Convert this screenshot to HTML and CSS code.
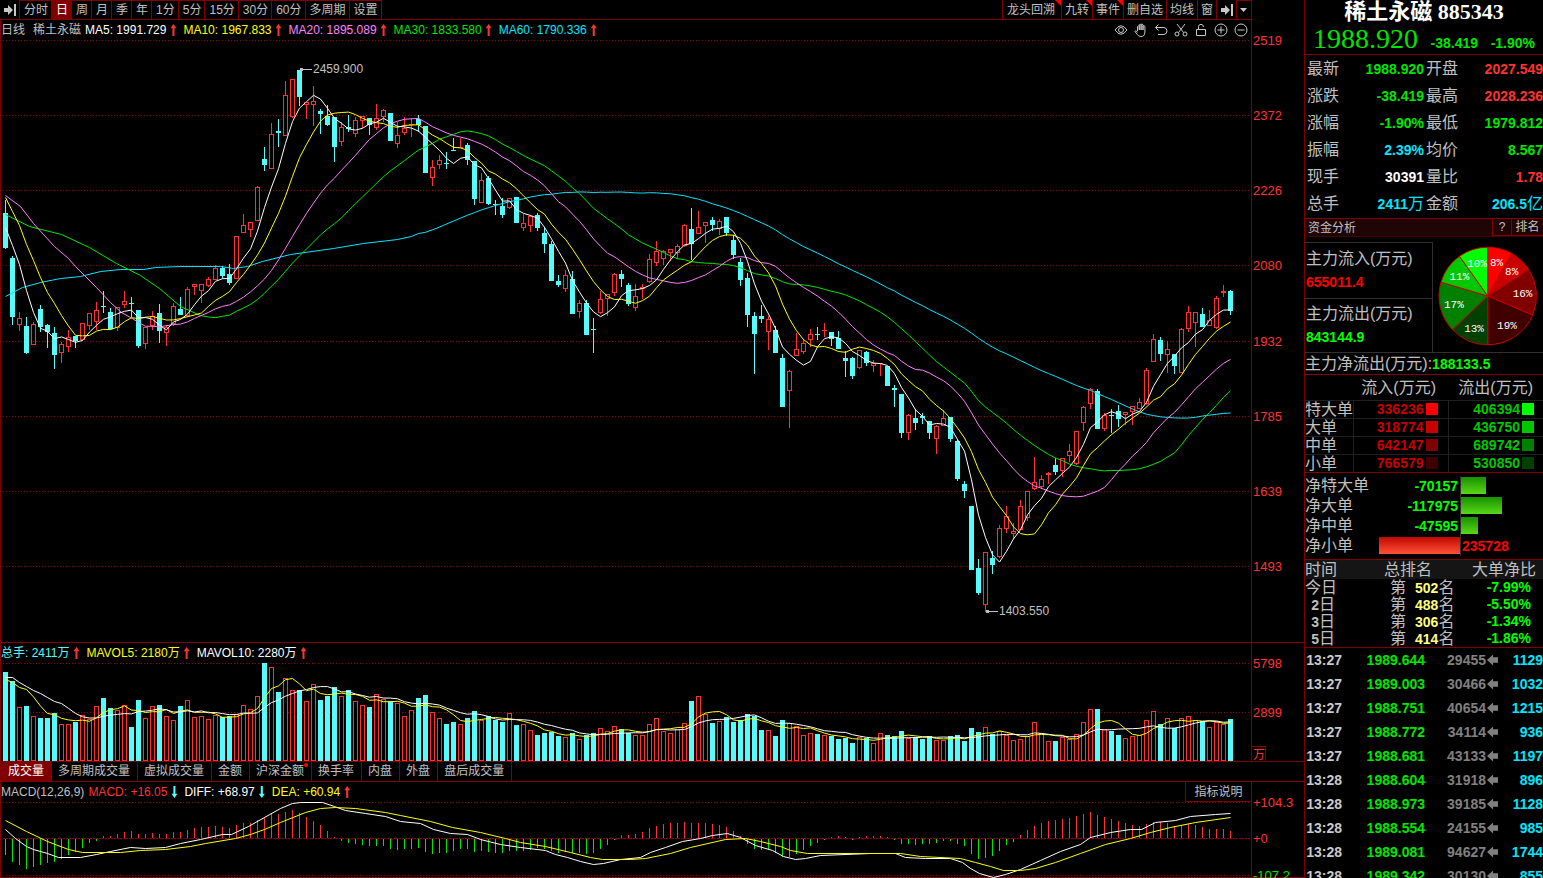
FILE: index.html
```html
<!DOCTYPE html>
<html lang="zh-CN">
<head>
<meta charset="utf-8">
<title>稀土永磁 885343</title>
<link rel="stylesheet" href="styles.css">
</head>
<body>
<main class="main">
  <nav class="toolbar">
    <button class="tool tool-icon" aria-label="跳转"><svg width="12" height="12" viewBox="0 0 12 12"><path d="M0 4h4V1l5 5-5 5V8H0zM10 0h2v12h-2z" fill="#c8c8c8"/></svg></button>
    <button class="tool">分时</button><button class="tool active">日</button><button class="tool">周</button><button class="tool">月</button><button class="tool">季</button><button class="tool">年</button><button class="tool">1分</button><button class="tool">5分</button><button class="tool">15分</button><button class="tool">30分</button><button class="tool">60分</button><button class="tool">多周期</button><button class="tool">设置</button>
    <span class="spacer"></span>
    <button class="tool right first ear">龙头回溯</button><button class="tool right ear">九转</button><button class="tool right ear">事件</button><button class="tool right">删自选</button><button class="tool right">均线</button><button class="tool right">窗</button>
    <button class="tool tool-icon" aria-label="收起"><svg width="12" height="12" viewBox="0 0 12 12"><path d="M0 4h4V1l5 5-5 5V8H0zM10 0h2v12h-2z" fill="#c8c8c8"/></svg></button>
    <button class="tool tool-drop" aria-label="更多"><svg width="7" height="4" viewBox="0 0 7 4"><path d="M0 0h7L3.500 4z" fill="#c8c8c8"/></svg></button>
  </nav>

  <section class="pane pane-price">
    <div class="info">
      <span class="gray">日线</span><span class="gray name">稀土永磁</span>
      <span class="stat white">MA5: 1991.729<i class="up"></i></span>
      <span class="stat yellow">MA10: 1967.833<i class="up"></i></span>
      <span class="stat pink">MA20: 1895.089<i class="up"></i></span>
      <span class="stat green">MA30: 1833.580<i class="up"></i></span>
      <span class="stat blue">MA60: 1790.336<i class="up"></i></span>
      <span class="spacer"></span>
      <span class="icons">
        <button aria-label="显示"><svg viewBox="0 0 14 14"><path d="M1 7q6-8.500 12 0q-6 8.500-12 0z"/><circle cx="7" cy="7" r="2.500"/></svg></button>
        <button aria-label="拖动"><svg viewBox="0 0 14 14"><path d="M3.500 8V3.500q.900-1.300 1.800 0V7V1.800q.900-1.300 1.800 0V7V1.500q1-1.200 1.900.3V7V3q1-1.200 1.900.300V9q0 4.500-4 4.500q-2.500 0-3.700-2.200L.8 8.300q.700-1.500 2.700.9"/></svg></button>
        <button aria-label="撤销"><svg viewBox="0 0 14 14"><path d="M4.500 1.500L1.500 4.500l3 3M1.500 4.500H10q3 .5 3 3.500t-3 3.500H4"/></svg></button>
        <button aria-label="剪切"><svg viewBox="0 0 14 14"><path d="M3 1l6.500 8.500M11 1L4.500 9.500"/><circle cx="3" cy="11" r="2"/><circle cx="11" cy="11" r="2"/></svg></button>
        <button aria-label="锁定"><svg viewBox="0 0 14 14"><path d="M2.500 6.500h9v6h-9zM4.500 6.500V3.500q0-2 2.500-2.200Q9.500 1.500 9.500 4"/></svg></button>
        <button aria-label="放大"><svg viewBox="0 0 14 14"><circle cx="7" cy="7" r="6"/><path d="M3.500 7h7M7 3.500v7"/></svg></button>
        <button aria-label="缩小"><svg viewBox="0 0 14 14"><circle cx="7" cy="7" r="6"/><path d="M3.500 7h7"/></svg></button>
      </span>
    </div>
    <svg class="chart chart-price" id="price"></svg>
  </section>

  <section class="pane">
    <div class="info">
      <span class="stat cyan">总手: 2411万<i class="up"></i></span>
      <span class="stat yellow">MAVOL5: 2180万<i class="up"></i></span>
      <span class="stat white">MAVOL10: 2280万<i class="up"></i></span>
    </div>
    <svg class="chart chart-volume" id="volume"></svg>
  </section>

  <nav class="tabs">
    <button class="tab active">成交量</button><button class="tab">多周期成交量</button><button class="tab">虚拟成交量</button><button class="tab">金额</button><button class="tab dot">沪深金额</button><button class="tab">换手率</button><button class="tab">内盘</button><button class="tab">外盘</button><button class="tab">盘后成交量</button>
  </nav>

  <section class="pane">
    <div class="info">
      <span class="gray">MACD(12,26,9)</span>
      <span class="stat red macd-first">MACD: +16.05<i class="down"></i></span>
      <span class="stat white">DIFF: +68.97<i class="down"></i></span>
      <span class="stat yellow">DEA: +60.94<i class="up"></i></span>
      <span class="spacer"></span>
      <button class="explain">指标说明</button>
    </div>
    <svg class="chart chart-macd" id="macd"></svg>
  </section>
</main>

<aside class="side">
  <header class="head">
    <h1>稀土永磁 885343</h1>
    <p><span class="last">1988.920</span><b>-38.419</b><b>-1.90%</b></p>
  </header>
  <dl class="quote">
    <dt>最新</dt><dd class="green">1988.920</dd><dt>开盘</dt><dd class="red">2027.549</dd>
    <dt>涨跌</dt><dd class="green">-38.419</dd><dt>最高</dt><dd class="red">2028.236</dd>
    <dt>涨幅</dt><dd class="green">-1.90%</dd><dt>最低</dt><dd class="green">1979.812</dd>
    <dt>振幅</dt><dd class="blue">2.39%</dd><dt>均价</dt><dd class="green">8.567</dd>
    <dt>现手</dt><dd class="white">30391</dd><dt>量比</dt><dd class="red">1.78</dd>
    <dt>总手</dt><dd class="blue">2411<span>万</span></dd><dt>金额</dt><dd class="blue">206.5<span>亿</span></dd>
  </dl>
  <div class="bar"><h2>资金分析</h2><button>?</button><button class="rank-btn">排名</button></div>
  <div class="capital">
    <div class="flows">
      <div class="flow"><span>主力流入(万元)</span><b class="in">655011.4</b></div>
      <div class="flow"><span>主力流出(万元)</span><b class="out">843144.9</b></div>
    </div>
    <svg class="pie" id="pie" viewBox="0 0 110 110"></svg>
  </div>
  <div class="net">主力净流出(万元):<b class="out">188133.5</b></div>
  <table class="orders">
    <thead><tr><th></th><th>流入(万元)</th><th>流出(万元)</th></tr></thead>
    <tbody>
      <tr><th>特大单</th><td class="oin">336236<i class="r1"></i></td><td class="oout">406394<i class="g1"></i></td></tr>
      <tr><th>大单</th><td class="oin">318774<i class="r2"></i></td><td class="oout">436750<i class="g2"></i></td></tr>
      <tr><th>中单</th><td class="oin">642147<i class="r3"></i></td><td class="oout">689742<i class="g3"></i></td></tr>
      <tr><th>小单</th><td class="oin">766579<i class="r4"></i></td><td class="oout">530850<i class="g4"></i></td></tr>
    </tbody>
  </table>
  <div class="netbars">
    <div class="nb"><span>净特大单</span><b class="out">-70157</b><div class="half"><i class="neg" style="width:25px"></i></div></div>
    <div class="nb"><span>净大单</span><b class="out">-117975</b><div class="half"><i class="neg" style="width:41px"></i></div></div>
    <div class="nb"><span>净中单</span><b class="out">-47595</b><div class="half"><i class="neg" style="width:17px"></i></div></div>
    <div class="nb"><span>净小单</span><div class="lhs"><i class="pos" style="width:81px"></i></div><div class="half"><b class="in">235728</b></div></div>
  </div>
  <table class="ranks">
    <thead><tr><th>时间</th><th>总排名</th><th>大单净比</th></tr></thead>
    <tbody>
      <tr><td>今日</td><td>第<b>502</b>名</td><td>-7.99%</td></tr>
      <tr><td><b>2</b>日</td><td>第<b>488</b>名</td><td>-5.50%</td></tr>
      <tr><td><b>3</b>日</td><td>第<b>306</b>名</td><td>-1.34%</td></tr>
      <tr><td><b>5</b>日</td><td>第<b>414</b>名</td><td>-1.86%</td></tr>
    </tbody>
  </table>
  <div class="ticks-wrap">
  <table class="ticks">
    <tbody>
      <tr><td>13:27</td><td>1989.644</td><td>29455<i class="left"></i></td><td>1129</td></tr>
      <tr><td>13:27</td><td>1989.003</td><td>30466<i class="left"></i></td><td>1032</td></tr>
      <tr><td>13:27</td><td>1988.751</td><td>40654<i class="left"></i></td><td>1215</td></tr>
      <tr><td>13:27</td><td>1988.772</td><td>34114<i class="left"></i></td><td>936</td></tr>
      <tr><td>13:27</td><td>1988.681</td><td>43133<i class="left"></i></td><td>1197</td></tr>
      <tr><td>13:28</td><td>1988.604</td><td>31918<i class="left"></i></td><td>896</td></tr>
      <tr><td>13:28</td><td>1988.973</td><td>39185<i class="left"></i></td><td>1128</td></tr>
      <tr><td>13:28</td><td>1988.554</td><td>24155<i class="left"></i></td><td>985</td></tr>
      <tr><td>13:28</td><td>1989.081</td><td>94627<i class="left"></i></td><td>1744</td></tr>
      <tr><td>13:28</td><td>1989.342</td><td>30130<i class="left"></i></td><td>855</td></tr>
    </tbody>
  </table>
  </div>
</aside>
<script src="charts.js"></script>
</body>
</html>
```

FILE: styles.css
```css
* { box-sizing: border-box; }
body {
  margin: 0;
  height: 100vh;
  display: flex;
  overflow: hidden;
  background: #000;
  color: #c0c0c0;
  font: 12px/18px "Liberation Sans", "Noto Sans CJK SC", sans-serif;
}
button {
  margin: 0;
  padding: 0;
  border: 0;
  background: none;
  color: inherit;
  font: inherit;
}
h1, h2, p, dl, dd { margin: 0; font-weight: normal; }
i { display: inline-block; flex: none; font-style: normal; }
.spacer { flex: 1; }

.white { color: #fff; }
.yellow { color: #ff0; }
.pink { color: #ff80ff; }
.green { color: #00e600; }
.blue { color: #00e6ff; }
.cyan { color: #54fcfc; }
.red { color: #ff3232; }
.in { color: #f00; }
.out { color: #0f0; }

/* chart column */
.main {
  flex: 1;
  min-width: 0;
  display: flex;
  flex-direction: column;
}
.toolbar {
  display: flex;
  flex: none;
  height: 20px;
  margin-right: 52px;
  border-bottom: 1px solid #800000;
  border-right: 1px solid #800000;
}
.tool {
  height: 19px;
  padding: 0 3px 0 4px;
  border-right: 1px solid #800000;
  border-top: 1px solid #800000;
  line-height: 18px;
  white-space: nowrap;
}
.tool.active { background: #800000; color: #fff; }
.tool-icon { display: flex; align-items: center; border-top: 0; }
.tool-drop { display: flex; align-items: center; width: 14px; padding: 0 3px; border-right: 0; }
.tool.right { position: relative; padding: 0 3px; border-top: 0; }
.tool.first { padding: 0 6px 0 4px; border-left: 1px solid #800000; }
.ear::after {
  content: "";
  position: absolute;
  top: 0;
  right: 0;
  border: 3px solid;
  border-color: #f00 #f00 transparent transparent;
}

.pane {
  flex: none;
  display: flex;
  flex-direction: column;
  border-left: 1px solid #800000;
  border-bottom: 1px solid #800000;
}
.pane-price { flex: 1; min-height: 0; }
.info {
  display: flex;
  flex: none;
  align-items: center;
  height: 20px;
  margin-right: 52px;
  border-right: 1px solid #800000;
  white-space: nowrap;
}
.name { margin: 0 4px 0 8px; }
.stat { display: flex; align-items: center; gap: 4px; margin-right: 7px; }
.macd-first { margin-left: 4px; }
.up, .down {
  width: 6px;
  height: 12px;
  background: #ff3232;
  clip-path: polygon(50% 0, 100% 35%, 67% 35%, 67% 100%, 33% 100%, 33% 35%, 0 35%);
}
.down {
  background: #54fcfc;
  clip-path: polygon(50% 100%, 100% 65%, 67% 65%, 67% 0, 33% 0, 33% 65%, 0 65%);
}
.icons { display: flex; gap: 6px; padding-right: 3px; }
.icons button { display: block; width: 14px; height: 14px; }
.icons svg { display: block; width: 14px; height: 14px; fill: none; stroke: #c8c8c8; }
.explain {
  width: 66px;
  height: 20px;
  border: 1px solid #800000;
  border-width: 0 0 1px 1px;
}
.chart { display: block; width: 100%; overflow: visible; }
.chart-price { flex: 1; min-height: 0; }
.chart-volume { height: 98px; }
.chart-macd { height: 75px; }
.chart text { font-size: 13px; }
.chart text.mark { font-size: 12px; }

.tabs {
  display: flex;
  flex: none;
  height: 20px;
  border-bottom: 1px solid #800000;
}
.tab {
  position: relative;
  height: 19px;
  padding: 0 7px 0 6px;
  border-right: 1px solid #800000;
  line-height: 19px;
}
.tab.active { padding: 0 8px; background: #800000; color: #fff; border-right: 0; }
.tab.dot::after {
  content: "";
  position: absolute;
  top: 1px;
  right: 3px;
  width: 4px;
  height: 4px;
  border-radius: 2px;
  background: #f00;
}

/* quote column */
.side {
  flex: none;
  display: flex;
  flex-direction: column;
  width: 239px;
  border-left: 1px solid #800000;
  font-size: 16px;
  line-height: 18px;
}
.side b, .quote dd, .orders td, .ranks td:last-child, .ticks td {
  font-size: 14px;
  font-weight: bold;
}
.head { height: 55px; border-bottom: 1px solid #800000; white-space: nowrap; }
.head h1 {
  height: 25px;
  color: #fff;
  font: bold 22px/24px "Liberation Serif", "Noto Sans CJK SC", serif;
  text-align: center;
}
.head p { display: flex; align-items: baseline; justify-content: space-between; padding: 0 8px; color: #00e600; }
.last { font: 28px/28px "Liberation Serif", serif; }
.quote {
  display: grid;
  grid-template-columns: 32px 1fr 32px 1fr;
  grid-auto-rows: 27px;
  align-items: center;
  column-gap: 2px;
  padding: 0 0 0 2px;
  height: 164px;
  border-bottom: 1px solid #800000;
  white-space: nowrap;
}
.quote dd { text-align: right; }
.quote dd span { font-size: 16px; font-weight: normal; }
.bar { display: flex; height: 18px; background: #1f0505; border-bottom: 1px solid #400000; font-size: 12px; }
.bar h2 { flex: 1; padding-left: 3px; font-size: 12px; }
.bar button { width: 20px; border: 1px solid #800000; border-top: 0; line-height: 16px; }
.bar .rank-btn { width: 31px; border-left: 0; border-right: 0; }
.capital { display: flex; height: 111px; margin-top: 5px; border-bottom: 1px solid #303030; }
.flows { width: 129px; border: 1px solid #303030; border-width: 1px 1px 0 0; }
.flow { display: flex; flex-direction: column; height: 55px; padding: 7px 0 0 1px; gap: 5px; white-space: nowrap; }
.flow + .flow { border-top: 1px solid #303030; padding-top: 6px; }
.pie { width: 110px; height: 110px; }
.pie text { fill: #fff; font: 11px "Liberation Mono", monospace; text-anchor: middle; }
.net { height: 22px; line-height: 21px; border-bottom: 1px solid #800000; white-space: nowrap; }
table { border-collapse: collapse; table-layout: fixed; width: 100%; }
td, th { padding: 0; font-weight: normal; white-space: nowrap; }
.orders { border-bottom: 1px solid #800000; }
.orders thead th { height: 25px; text-align: right; padding: 2px 12px 0 0; }
.orders thead th:first-child { width: 48px; padding: 0; }
.orders thead th:last-child { padding-right: 10px; }
.orders tbody tr { height: 18px; border-top: 1px solid #202020; }
.orders tbody th, .orders td { line-height: 17px; }
.orders tbody th { text-align: left; border-right: 1px solid #202020; }
.orders td { text-align: right; padding-right: 10px; border-right: 1px solid #202020; }
.orders td:last-child { padding-right: 9px; border-right: 0; }
.orders i { width: 12px; height: 12px; margin-left: 2px; vertical-align: -1px; }
.oin { color: #c80000; }
.oout { color: #00c800; }
.r1 { background: #f00; } .r2 { background: #c80000; } .r3 { background: #800000; } .r4 { background: #400000; }
.g1 { background: #0f0; } .g2 { background: #00c800; } .g3 { background: #008000; } .g4 { background: #004000; }
.netbars { padding: 3px 0 3px; border-bottom: 1px solid #800000; }
.nb { display: flex; align-items: center; height: 20px; }
.nb span { width: 64px; }
.nb > b { flex: 1; padding-right: 2px; text-align: right; }
.lhs { display: flex; flex: 1; justify-content: flex-end; }
.half { display: flex; align-items: center; width: 83px; height: 20px; border-left: 1px solid #303030; }
.half b { padding-left: 1px; }
.neg, .pos { height: 17px; background: linear-gradient(#189000, #58d818); }
.pos { background: linear-gradient(#c00800, #ff5038); }
.ranks { border-bottom: 1px solid #800000; }
.ranks thead { background: #151515; }
.ranks th { height: 19px; line-height: 19px; text-align: center; }
.ranks th:first-child { width: 56px; text-align: left; }
.ranks th:nth-child(2) { width: 94px; }
.ranks th:last-child { text-align: right; padding-right: 7px; }
.ranks tbody { line-height: 17px; }
.ranks td { height: 17px; line-height: 17px; }
.ranks b { line-height: 14px; }
.ranks td:first-child { width: 56px; padding-right: 26px; text-align: right; }
.ranks td:nth-child(2) { padding-left: 29px; }
.ranks td:nth-child(2) b { padding-left: 9px; color: #ffff80; }
.ranks td:last-child { padding-right: 12px; text-align: right; color: #0f0; }
.ticks-wrap { flex: 1; min-height: 0; overflow: hidden; }
.ticks td { height: 24px; line-height: 16px; text-align: right; color: #00e600; }
.ticks td:first-child { width: 37px; color: #c8c8c8; }
.ticks td:nth-child(2) { width: 83px; }
.ticks td:nth-child(3) { width: 73px; color: #808080; }
.ticks td:last-child { color: #00e6ff; }
.left {
  width: 11px;
  height: 11px;
  margin-left: 1px;
  vertical-align: -1px;
  background: #808080;
  clip-path: polygon(0 50%, 55% 0, 55% 25%, 100% 25%, 100% 75%, 55% 75%, 55% 100%);
}
```

FILE: charts.js
```js
const BASE_WIDTH = 1303;
const RED = "#ff3232", CYAN = "#54fcfc", DARK = "#800000";

// One row per day: d (down) or u (up), body top, body bottom, wick top, wick bottom.
const candles = `d213,248,200,249 d258,317,256,325 u318,325,312,331 d326,353,317,354 u324,345,322,345 d309,327,305,332 d325,332,324,348 d333,355,327,369 u344,353,342,363 u337,347,330,352
d336,341,336,348 u323,340,323,341 u313,326,313,330 u310,322,302,330 d306,307,291,313 d312,329,308,330 u307,328,307,331 u301,305,291,308 d303,304,297,317 d310,346,310,348
u327,344,327,349 u316,326,311,330 d313,331,304,343 u327,333,325,346 u306,324,303,326 d309,315,297,315 u289,316,287,317 u284,287,284,295 u284,291,284,303 u279,286,277,287
u268,280,265,280 d268,276,266,279 d274,283,264,285 u236,279,236,279 u225,233,214,233 u222,230,222,237 u187,221,186,221 d159,165,147,171 u134,169,123,169 d131,133,119,147
u95,136,81,136 u79,117,79,118 d70,97,70,106 u102,105,102,119 u101,105,86,126 d111,114,109,134 d116,125,105,126 d117,147,117,162 u127,142,122,146 d127,129,115,132
u120,134,117,137 u116,121,116,128 d118,125,118,135 u118,128,104,130 u110,117,109,122 d113,141,113,141 u135,144,122,148 u128,133,117,135 u124,125,118,137 d119,125,115,132
d126,173,126,173 u167,178,160,186 u160,165,155,169 d163,164,152,169 d150,151,138,151 u147,148,138,148 d145,160,143,165 d161,199,161,205 u180,203,173,203 d178,204,176,205
d204,205,200,215 d206,215,198,218 u198,208,198,209 d197,223,197,223 u223,228,214,231 u216,226,215,232 d215,228,213,231 d233,244,227,253 d244,281,241,281 d281,285,275,287
u275,289,270,292 d279,314,271,314 u303,312,300,318 d303,335,300,335 d329,330,318,353 u299,313,291,314 u294,299,294,316 u274,293,273,296 d274,279,270,287 d285,304,283,306
u296,308,284,311 u287,289,284,299 u259,282,254,283 u251,263,241,266 u251,259,250,265 u249,253,249,261 u246,253,244,259 u225,246,224,247 d229,244,208,260 u227,234,211,234
u222,226,222,243 d220,225,217,231 u221,229,219,235 d217,233,217,236 d240,255,235,259 d262,280,258,286 d278,315,273,327 d316,334,312,374 d316,319,305,323 u319,332,316,350
d330,353,326,353 d358,407,354,407 u371,391,370,428 u349,356,333,356 u343,352,339,354 u334,340,329,347 d334,335,327,340 u330,331,323,337 d332,339,332,346 d338,349,331,349
d358,361,351,377 d358,376,357,379 u350,368,350,369 d352,363,351,366 u363,366,360,372 u363,364,363,376 d366,386,366,386 d388,390,385,407 d394,433,394,438 u415,433,414,440
d418,423,409,430 d416,418,413,424 d421,433,421,439 u426,439,425,454 u418,426,410,426 d417,439,417,442 d441,479,439,481 d484,491,481,498 d506,570,506,570 d568,593,559,595
u552,605,552,612 d558,565,551,574 u528,557,525,558 u516,529,506,533 u531,534,523,539 u506,530,500,530 u491,518,491,521 u482,489,457,490 u479,487,475,489 u473,475,472,484
d465,472,458,475 u458,471,458,477 u451,456,444,462 u431,464,431,465 u407,423,406,431 u389,404,388,409 d391,429,389,429 u415,429,413,431 d415,416,409,433 d411,419,405,427
u412,415,412,425 u406,412,406,425 u402,409,398,409 u370,404,368,405 u339,362,334,362 d340,354,337,361 u349,355,341,373 d354,366,354,374 u329,373,328,373 u312,329,306,332
u312,323,312,347 d314,327,308,327 u320,326,310,326 u298,328,296,329 u291,293,285,297 d291,311,290,315`
  .split(/\s+/).map(s => ({ down: s[0] === "d", v: s.slice(1).split(",").map(Number) }));
const closes = candles.map(c => c.down ? c.v[1] : c.v[0]);

const volumes = [672,681,707,706,716,718,718,713,724,724,722,715,719,706,698,708,710,705,727,700,718,706,705,716,720,706,700,717,716,719,715,717,716,714,705,709,696,663,667,692,678,690,690,701,684,700,696,687,696,690,701,705,707,694,699,701,703,716,710,698,695,712,718,724,722,724,718,711,720,716,720,722,713,725,724,730,735,733,732,736,737,733,739,735,733,728,731,726,729,733,735,735,724,718,731,733,729,723,701,696,714,723,721,717,722,720,714,716,730,730,736,720,723,726,735,733,734,735,736,739,738,743,737,738,743,733,735,736,731,738,737,739,736,740,740,736,735,741,728,732,727,734,731,735,740,739,736,722,733,741,741,737,739,734,722,709,709,729,731,735,738,736,735,720,711,724,718,728,718,716,720,721,727,722,724,719];

const histogram = [-16,-23,-26,-30,-28,-26,-24,-23,-20,-16,-13,-9,-4,-2,2,2,4,6,7,4,4,5,4,4,6,6,8,10,11,11,12,11,10,13,15,15,18,21,24,24,26,28,25,21,17,13,7,1,-2,-4,-5,-6,-7,-7,-7,-10,-11,-10,-10,-9,-13,-15,-14,-14,-12,-10,-10,-13,-12,-13,-14,-14,-12,-12,-12,-11,-9,-10,-12,-14,-13,-14,-14,-15,-14,-10,-6,-1,3,3,4,6,10,12,14,15,15,16,15,15,15,14,13,11,7,2,-5,-10,-11,-10,-14,-18,-18,-15,-11,-7,-4,-1,1,2,1,-1,1,2,2,2,1,-1,-5,-5,-6,-5,-5,-4,-2,-2,-5,-7,-15,-20,-19,-17,-12,-6,-3,3,8,12,15,17,18,19,20,22,24,26,23,21,19,17,15,13,12,14,16,16,15,12,13,14,13,11,9,9,9,7];

const diff = "5,829 15,838 26,846 33,849 47,853 58,857 80,857 96,854 110,851 130,847 145,848 165,847 180,843 200,839 222,834 231,834 248,826 264,817 280,808 292,803 300,802 322,802 334,806 345,810 365,813 385,816 400,821 420,823 433,829 450,833 467,834 480,839 500,844 520,847 545,850 555,854 567,857 580,861 593,864 603,863 620,859 640,857 650,852 665,847 682,841 700,838 712,835 727,833 740,837 755,845 772,850 783,856 795,859 805,858 820,855 870,853 895,853 905,857 925,858 950,858 962,862 970,868 979,873 993,877 1005,874 1020,869 1040,860 1060,851 1080,844 1090,837 1110,832 1130,829 1141,829 1155,822 1175,820 1190,816 1215,814 1230,813";
const dea = "5,820 26,831 47,841 68,849 82,852 120,852 140,850 165,849 190,846 205,843 235,838 250,834 264,829 280,822 305,812 320,808 335,807 355,808 385,812 400,815 430,821 452,827 480,832 505,838 520,842 545,846 570,852 590,857 602,859 630,859 645,858 670,853 690,847 725,839 745,838 760,841 780,846 790,850 807,853 900,853 920,856 960,858 975,862 990,866 1003,870 1020,870 1035,868 1055,862 1080,853 1105,844 1130,838 1150,832 1170,827 1195,822 1230,817";

const pairs = s => s.split(" ").map(p => p.split(",").map(Number));
const dayX = i => 5 + 7 * i;

// Moving average of n days; seed holds the points before n days are available.
function average(values, n, seed) {
  const points = pairs(seed);
  for (let i = n - 1; i < values.length; i++) {
    const slice = values.slice(i - n + 1, i + 1);
    points.push([dayX(i), slice.reduce((a, b) => a + b) / n]);
  }
  return points;
}

// Each pane draws in its own design units, then scales to the space it has.
function pane(id, top, height) {
  const svg = document.getElementById(id);
  const sx = svg.clientWidth / BASE_WIDTH, sy = svg.clientHeight / height;
  const X = x => (x - 1) * sx, Y = y => (y - top) * sy;
  let out = "";
  return {
    rect(x, y, w, h, fill, stroke) {
      const o = stroke ? 0.5 : 0;
      out += `<rect x="${X(x) + o}" y="${Y(y) + o}" width="${Math.max(w * sx - 2 * o, 0)}" height="${Math.max(h * sy - 2 * o, 0)}" fill="${fill}"${stroke ? ` stroke="${stroke}"` : ""}/>`;
    },
    grid(y, dash) {
      out += `<path d="M${X(3)} ${Y(y) + 0.5}H${X(1251)}" stroke="#900000" stroke-dasharray="${dash || "1 2"}"/>`;
    },
    line(points, color) {
      out += `<polyline fill="none" stroke="${color}" points="${points.map(p => `${(X(p[0]) + 0.5).toFixed(1)},${(Y(p[1]) + 0.5).toFixed(1)}`).join(" ")}"/>`;
    },
    text(x, y, s, color, cls) {
      out += `<text x="${X(x)}" y="${Y(y)}" fill="${color}" class="${cls || ""}">${s}</text>`;
    },
    done() { svg.innerHTML = out; }
  };
}

function drawPrice() {
  const p = pane("price", 40, 602);
  [[40, 2519], [115, 2372], [190, 2226], [265, 2080], [341, 1932], [416, 1785], [491, 1639], [566, 1493]].forEach(([y, label]) => {
    p.grid(y);
    p.text(1253, y + 5, label, RED);
  });
  p.rect(1251, 40, 1, 602, DARK);
  candles.forEach((c, i) => {
    const [t, b, hi, lo] = c.v, x = dayX(i);
    if (c.down) {
      p.rect(x, hi, 1, lo - hi, CYAN);
      p.rect(x - 2, t, 5, Math.max(b - t, 1), CYAN);
    } else {
      p.rect(x, hi, 1, t - hi, RED);
      p.rect(x, b, 1, lo - b, RED);
      if (b - t < 3) p.rect(x - 2, t, 5, Math.max(b - t, 1), RED);
      else p.rect(x - 2, t, 5, b - t, "none", RED);
    }
  });
  p.line(average(closes, 60, "5,296 22,287 40,282 60,278 80,276 100,271 120,269 143,269 155,267 180,266 220,266 233,268 247,266 262,261 290,254 333,248 363,243 397,239 411,236"), "#00e6ff");
  p.line(average(closes, 30, "5,214 29,226 61,234 89,247 116,263 140,275 159,288 180,306 200,315"), "#00e600");
  p.line(average(closes, 20, "5,195 20,206 33,223 54,246 68,258 75,266 96,287 110,302 121,312 130,317"), "#ff80ff");
  p.line(average(closes, 10, "5,197 12,211 19,225 26,244 33,260 40,277 47,292 54,303 61,315"), "#ff0");
  p.line(average(closes, 5, "5,227 12,245 19,264 26,290"), "#fff");
  [[299, 69, 2459.9], [985, 611, 1403.55]].forEach(([x, y, value]) => {
    p.rect(x + 1, y, 12, 1, "#c0c0c0");
    p.rect(x + 1, y - 1, 3, 3, "#c0c0c0");
    p.text(x + 14, y + 4, value.toFixed(3), "#c0c0c0", "mark");
  });
  p.done();
}

function drawVolume() {
  const p = pane("volume", 663, 98);
  [[663, 5798], [712, 2899]].forEach(([y, label]) => {
    p.grid(y);
    p.text(1253, y + 5, label, RED);
  });
  p.rect(1251, 663, 1, 98, DARK);
  volumes.forEach((t, i) => {
    if (candles[i].down) p.rect(dayX(i) - 2, t, 5, 761 - t, CYAN);
    else p.rect(dayX(i) - 2, t, 5, 761 - t, "#000", RED);
  });
  p.line(average(volumes, 5, "5,679 12,682 19,687 26,689"), "#ff0");
  p.line(average(volumes, 10, "5,677 12,677 19,682 26,686 33,690 40,693 47,697 54,701 61,703"), "#fff");
  p.rect(1251, 746, 15, 16, "none", DARK);
  p.text(1253, 759, "万", RED, "mark");
  p.done();
}

function drawMacd() {
  const p = pane("macd", 802, 75);
  p.grid(802);
  p.grid(838, "2 1");
  p.grid(875);
  p.text(1253, 807, "+104.3", RED);
  p.text(1253, 843, "+0", RED);
  p.text(1253, 880, "-107.2", "#00e600");
  p.rect(1251, 802, 1, 75, DARK);
  histogram.forEach((h, i) => {
    if (h > 0) p.rect(dayX(i), 838 - h, 1, h, RED);
    else p.rect(dayX(i), 839, 1, -h, "#00e600");
  });
  p.line(pairs(diff), "#fff");
  p.line(pairs(dea), "#ff0");
  p.done();
}

function drawPie() {
  const slices = [
    [336236, "#f00", 8], [318774, "#c80000", 8], [642147, "#800000", 16], [766579, "#400000", 19],
    [530850, "#004000", 13], [689742, "#008000", 17], [436750, "#00c800", 11], [406394, "#0f0", 10]
  ];
  const total = slices.reduce((sum, s) => sum + s[0], 0);
  const cx = 55, cy = 54, r = 49;
  const at = (a, d) => [cx + Math.sin(a) * d, cy - Math.cos(a) * d];
  let angle = 0, shapes = "", labels = "";
  slices.forEach(([value, color, percent]) => {
    const next = angle + value / total * Math.PI * 2;
    const [x, y] = at((angle + next) / 2, 35);
    shapes += `<path d="M${cx} ${cy}L${at(angle, r)}A${r} ${r} 0 0 1 ${at(next, r)}Z" fill="${color}" stroke="#c80000"/>`;
    labels += `<text x="${x}" y="${y + 4}">${percent}%</text>`;
    angle = next;
  });
  document.getElementById("pie").innerHTML = shapes + labels;
}

function drawAll() {
  drawPrice();
  drawVolume();
  drawMacd();
}
drawPie();
drawAll();
window.addEventListener("resize", drawAll);
```
